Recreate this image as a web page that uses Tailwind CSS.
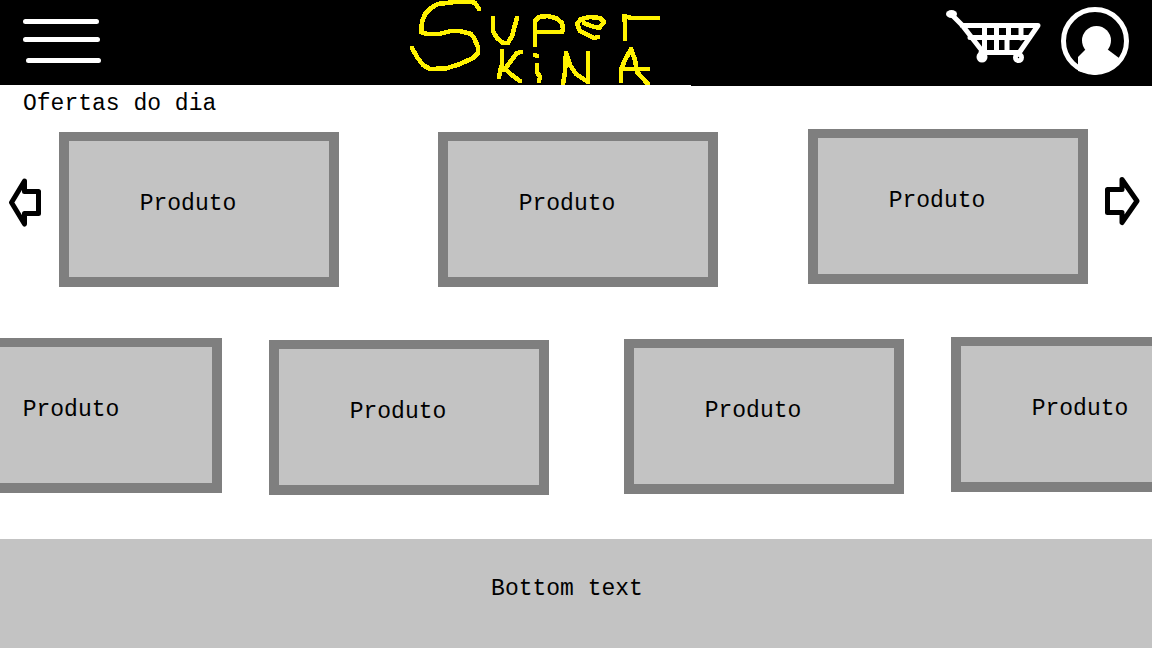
<!DOCTYPE html>
<html lang="pt-BR">
<head>
<meta charset="utf-8">
<meta name="viewport" content="width=device-width, initial-scale=1">
<title>Super Kina</title>
<script src="https://cdn.jsdelivr.net/npm/@tailwindcss/browser@4"></script>
</head>
<body class="flex min-h-screen flex-col overflow-x-hidden bg-white font-['Liberation_Mono',monospace] text-[23px] leading-7 text-black">
<header class="relative grid h-[86px] grid-cols-[1fr_auto_1fr] items-start bg-black pr-[23px] pl-[23px] after:absolute after:bottom-0 after:left-0 after:h-px after:w-3/5 after:bg-white">
  <button type="button" aria-label="Menu" class="mt-4 w-20">
    <svg class="block" width="80" height="50" viewBox="23 16 80 50" fill="none" stroke="#fff" stroke-width="5" stroke-linecap="round"><path d="M25.5 21.5H96.500M25.500 39.500H97.500M28.500 60.500H98.500"/></svg>
  </button>
  <a href="#" aria-label="Super Kina" class="pr-20">
    <svg class="block" width="252" height="85" viewBox="410 0 252 85" fill="none" stroke="#fff200" stroke-width="4.6" stroke-linecap="round" stroke-linejoin="round" shape-rendering="crispEdges">
      <path d="M479 9L475 3L471 1.500H459L438 4L431 8L425 14L422 22L421 32L427 34H439L451 31H460L471 34L474 38L478 47V53L473 58L460 64L446 68.500L430 69L423 65L417 57L412 48"/>
      <path d="M493 18V31L497 38L503 43L508 43L512 36L515 25L517 18"/>
      <path d="M535 45V21L539 17L547 16L556 18L562 23L563 29L562 32H536"/>
      <path d="M584 23L591 26L599 28L604 22L600 18L590 17L581 19L577 24L580 31L588 35L594 38L598 37"/>
      <path d="M625 39V23L624 16L631 18H658"/>
      <path d="M502 51V64L499 77M521 52L517 53L510 62L505 69L500 70M505 69L513 76L520 81"/>
      <path d="M535 55L537 56M537 65V72L540 77L539 81"/>
      <path d="M563 84L565 72L566 53L570 65L576 74L588 82V53"/>
      <path d="M621 81V70L624 62L631 49L635 60L637 72L648 84M624 69H648"/>
    </svg>
  </a>
  <div class="flex items-start justify-end gap-5">
    <button type="button" aria-label="Carrinho" class="mt-2">
      <svg class="block" width="96" height="56" viewBox="945 8 96 56" fill="none" stroke="#fff" stroke-width="5" stroke-linecap="round" stroke-linejoin="round">
        <ellipse cx="951.500" cy="14" rx="5.500" ry="4" fill="#fff" stroke="none"/>
        <path d="M952 15L962 25L983 52M962 25.500H1038L1019 53M970 37.500H1029M981 52.500H1018M984.500 26V52M996.500 26V52M1008.500 26V37L1007 40V52M1021 26V38"/>
        <circle cx="982" cy="57" r="5.500" fill="#fff" stroke="none"/>
        <circle cx="1018.500" cy="57.500" r="5.500" fill="#fff" stroke="none"/>
        <circle cx="1018.500" cy="57.500" r=".7" fill="#000" stroke="none"/>
      </svg>
    </button>
    <button type="button" aria-label="Perfil" class="mt-[7px]">
      <svg class="block" width="68" height="68" viewBox="1061 7 68 68" fill="#fff">
        <circle cx="1095" cy="41" r="31.500" fill="none" stroke="#fff" stroke-width="5"/>
        <circle cx="1096.500" cy="40.500" r="14.500"/>
        <path d="M1078 57L1086 49H1107L1119 58L1116 65L1109 71L1095 75L1078 71Z"/>
      </svg>
    </button>
  </div>
</header>

<main class="overflow-hidden">
  <h1 class="mt-1 mb-[11px] pl-[23px]">Ofertas do dia</h1>
  <section aria-label="Ofertas" class="flex items-start pr-3 pl-[9px]">
    <button type="button" aria-label="Anterior" class="mt-12 w-8 shrink-0">
      <svg class="block" width="32" height="52" viewBox="9 177 32 52" fill="none" stroke="#000" stroke-width="5" stroke-linejoin="round"><path d="M38.500 191.500H24.500V181L11.500 202.500L24.500 224V213.500H38.500Z"/></svg>
    </button>
    <ul class="mr-4 ml-[18px] grid grow grid-cols-[379fr_370fr_280px] items-start">
      <li class="mt-[3px] flex h-[155px] w-[280px] items-center justify-center border-10 border-t-9 border-[#7f7f7f] bg-[#c3c3c3] pr-[22px] pb-2.5"><a href="#">Produto</a></li>
      <li class="mt-[3px] flex h-[155px] w-[280px] items-center justify-center border-10 border-t-9 border-[#7f7f7f] bg-[#c3c3c3] pr-[22px] pb-2.5"><a href="#">Produto</a></li>
      <li class="flex h-[155px] w-[280px] items-center justify-center border-10 border-t-9 border-[#7f7f7f] bg-[#c3c3c3] pr-[22px] pb-2.5"><a href="#">Produto</a></li>
    </ul>
    <button type="button" aria-label="Próximo" class="mt-[46px] w-9 shrink-0">
      <svg class="block" width="36" height="52" viewBox="1104 175 36 52" fill="none" stroke="#000" stroke-width="5" stroke-linejoin="round"><path d="M1107.500 189.500H1122V179.500L1137 201L1122 222.500V212.500H1107.500Z"/></svg>
    </button>
  </section>
  <ul aria-label="Mais produtos" class="-mr-[79px] -ml-[58px] mt-[50px] grid grid-cols-[327fr_355fr_327fr_280px] items-start">
    <li class="mt-px flex h-[155px] w-[280px] items-center justify-center border-10 border-t-9 border-[#7f7f7f] bg-[#c3c3c3] pr-[22px] pb-2.5"><a href="#">Produto</a></li>
    <li class="mt-[3px] flex h-[155px] w-[280px] items-center justify-center border-10 border-t-9 border-[#7f7f7f] bg-[#c3c3c3] pr-[22px] pb-2.5"><a href="#">Produto</a></li>
    <li class="mt-0.5 flex h-[155px] w-[280px] items-center justify-center border-10 border-t-9 border-[#7f7f7f] bg-[#c3c3c3] pr-[22px] pb-2.5"><a href="#">Produto</a></li>
    <li class="flex h-[155px] w-[280px] items-center justify-center border-10 border-t-9 border-[#7f7f7f] bg-[#c3c3c3] pr-[22px] pb-2.5"><a href="#">Produto</a></li>
  </ul>
</main>

<footer class="mt-11 flex grow items-center justify-center bg-[#c3c3c3] pr-[18px] pb-2.5">
  <p>Bottom text</p>
</footer>
</body>
</html>
